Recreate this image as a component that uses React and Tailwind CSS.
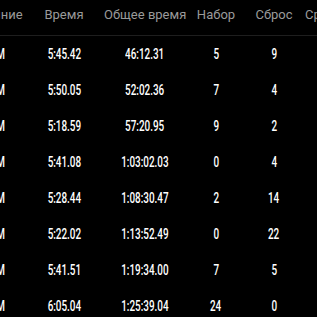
import React from 'react';

const rows = [
  ['1,00 KM', '5:45.42', '46:12.31', '5', '9'],
  ['1,00 KM', '5:50.05', '52:02.36', '7', '4'],
  ['1,00 KM', '5:18.59', '57:20.95', '9', '2'],
  ['1,00 KM', '5:41.08', '1:03:02.03', '0', '4'],
  ['1,00 KM', '5:28.44', '1:08:30.47', '2', '14'],
  ['1,00 KM', '5:22.02', '1:13:52.49', '0', '22'],
  ['1,00 KM', '5:41.51', '1:19:34.00', '7', '5'],
  ['1,00 KM', '6:05.04', '1:25:39.04', '24', '0'],
];

// fixed column widths, table is scrolled left
const cols = ['w-[92px] pl-[18px]', 'w-[80px]', 'w-[82px]', 'w-[60px]', 'w-[56px]', 'w-[60px]'];

const Num = ({ children }) => (
  <span className="inline-block scale-x-[0.66] font-medium">{children}</span>
);

const App = () => {
  return (
    <div className="w-[317px] h-[317px] bg-black overflow-hidden font-['Roboto',sans-serif]">
      <div className="-ml-[68px] flex flex-col w-[500px]">
        <div className="flex h-[35px] items-center pb-[6px] text-[13px] text-[#9a9a9a] whitespace-nowrap">
          <div className={`${cols[0]} shrink-0 text-center`}>Расстояние</div>
          <div className={`${cols[1]} shrink-0 text-center`}>Время</div>
          <div className={`${cols[2]} shrink-0 text-center`}>Общее время</div>
          <div className={`${cols[3]} shrink-0 text-center`}>Набор</div>
          <div className={`${cols[4]} shrink-0 text-center`}>Сброс</div>
          <div className={`${cols[5]} shrink-0 text-left pl-[3px]`}>Средний</div>
        </div>
        <div className="h-px bg-[#1e1e1e]"></div>
        {rows.map((r, i) => (
          <div key={i} className="flex h-[36px] items-center text-[15px] text-white whitespace-nowrap">
            <div className={`${cols[0]} shrink-0 text-center`}><Num>{r[0]}</Num></div>
            <div className={`${cols[1]} shrink-0 text-center`}><Num>{r[1]}</Num></div>
            <div className={`${cols[2]} shrink-0 text-center`}><Num>{r[2]}</Num></div>
            <div className={`${cols[3]} shrink-0 text-center`}><Num>{r[3]}</Num></div>
            <div className={`${cols[4]} shrink-0 text-center`}><Num>{r[4]}</Num></div>
            <div className={`${cols[5]} shrink-0`}></div>
          </div>
        ))}
      </div>
    </div>
  );
};

export default App;
